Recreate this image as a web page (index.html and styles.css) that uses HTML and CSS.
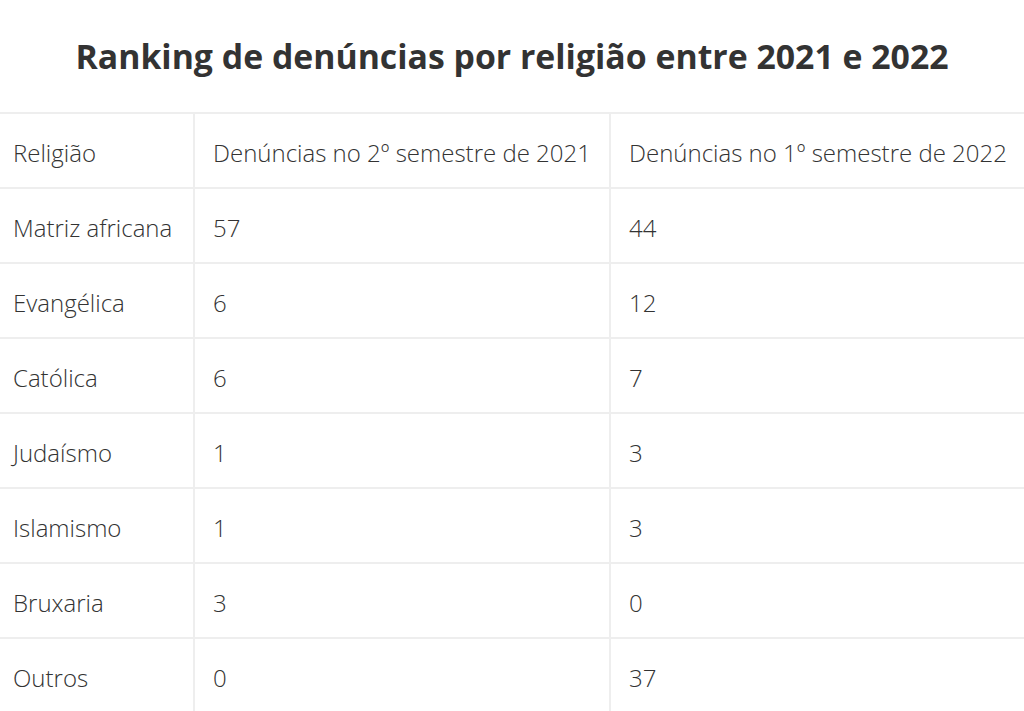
FILE: index.html
```html
<!DOCTYPE html>
<html lang="pt">
<head>
<meta charset="utf-8">
<title>Ranking de denúncias por religião</title>
<link rel="stylesheet" href="styles.css">
</head>
<body>
<div class="page">
  <h1 class="title">Ranking de denúncias por religião entre 2021 e 2022</h1>
  <div class="table-wrap">
    <table class="data">
      <colgroup>
        <col class="c1"><col class="c2"><col class="c3">
      </colgroup>
      <tbody>
        <tr><td>Religião</td><td>Denúncias no 2º semestre de 2021</td><td>Denúncias no 1º semestre de 2022</td></tr>
        <tr><td>Matriz africana</td><td>57</td><td>44</td></tr>
        <tr><td>Evangélica</td><td>6</td><td>12</td></tr>
        <tr><td>Católica</td><td>6</td><td>7</td></tr>
        <tr><td>Judaísmo</td><td>1</td><td>3</td></tr>
        <tr><td>Islamismo</td><td>1</td><td>3</td></tr>
        <tr><td>Bruxaria</td><td>3</td><td>0</td></tr>
        <tr><td>Outros</td><td>0</td><td>37</td></tr>
      </tbody>
    </table>
  </div>
</div>
</body>
</html>
```
FILE: styles.css
```css
html, body {
  margin: 0;
  padding: 0;
  background: #fff;
}
body {
  font-family: "Open Sans", "Liberation Sans", sans-serif;
  color: #333;
  overflow: hidden;
}
.page {
  width: 1024px;
  overflow: hidden;
}
.title {
  margin: 0;
  height: 112px;
  display: flex;
  align-items: center;
  justify-content: center;
  font-size: 33.8px;
  font-weight: 700;
  color: #333;
  white-space: nowrap;
}
.table-wrap {
  width: 1060px;
}
.data {
  border-collapse: collapse;
  table-layout: fixed;
  width: 1060px;
  font-size: 24px;
  font-weight: 300;
  color: #333;
}
.c1 { width: 194px; }
.c2 { width: 416px; }
.c3 { width: 450px; }
.data td {
  height: 75px;
  padding: 3px 0 0 18px;
  border: 2px solid #eeeeee;
  vertical-align: middle;
  white-space: nowrap;
  box-sizing: border-box;
}
.data td:first-child {
  padding-left: 13px;
  border-left: none;
}
```
